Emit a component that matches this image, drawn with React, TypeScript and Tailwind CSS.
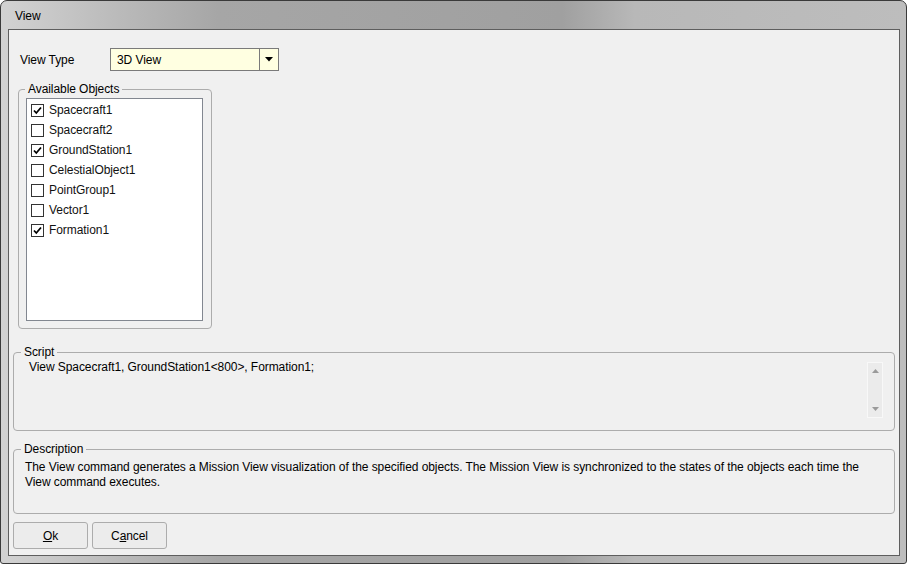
import React from 'react';

interface ViewObject {
  name: string;
  checked: boolean;
}

const objects: ViewObject[] = [
  { name: 'Spacecraft1', checked: true },
  { name: 'Spacecraft2', checked: false },
  { name: 'GroundStation1', checked: true },
  { name: 'CelestialObject1', checked: false },
  { name: 'PointGroup1', checked: false },
  { name: 'Vector1', checked: false },
  { name: 'Formation1', checked: true },
];

function CheckBox({ checked }: { checked: boolean }) {
  return (
    <div className="w-[13px] h-[13px] border border-[#333] bg-white flex items-center justify-center shrink-0">
      {checked && (
        <svg width="9" height="9" viewBox="0 0 9 9">
          <path d="M1 4.5 L3.3 7 L8 1.5" fill="none" stroke="#000" strokeWidth="1.8" />
        </svg>
      )}
    </div>
  );
}

export default function App() {
  return (
    <div
      className="w-[907px] h-[564px] flex flex-col border border-[#3a3a3a] rounded-t-[7px] rounded-b-[3px] overflow-hidden bg-[linear-gradient(90deg,#d2d2d2_0%,#a6a6a6_24%,#a0a0a0_62%,#b8b8b8_70%,#bdbdbd_100%)] text-[12px] tracking-[-0.07px] text-black"
      style={{ fontFamily: '"Liberation Sans", Arial, sans-serif' }}
    >
      {/* Title bar */}
      <div className="h-[28px] flex items-center pl-[14px] pt-[1px] text-[12px]">View</div>

      {/* Client area */}
      <div className="flex-1 ml-[7px] mr-[6px] mb-[7px] border border-[#5e5e5e] bg-[#f0f0f0] flex flex-col">
        {/* View type row */}
        <div className="flex items-center mt-[18px] ml-[11px]">
          <span className="w-[90px]">View Type</span>
          <div className="w-[169px] h-[23px] border border-[#7a7a7a] bg-[#ffffe1] flex items-stretch">
            <span className="flex-1 pl-[6px] flex items-center">3D View</span>
            <div className="w-[19px] border-l border-[#7a7a7a] flex items-center justify-center">
              <svg width="8" height="5" viewBox="0 0 8 5">
                <path d="M0 0 H8 L4 4.5 Z" fill="#000" />
              </svg>
            </div>
          </div>
        </div>

        {/* Available objects */}
        <fieldset className="ml-[9px] mt-[10px] w-[194px] h-[248px] border border-[#acacac] rounded-[4px]">
          <legend className="ml-[6px] px-[3px] leading-[16px]">Available Objects</legend>
          <div className="pl-[7px] pr-[8px] pb-[6px] pt-[1px]">
            <div className="h-[223px] border border-[#828790] bg-white pl-[4px] pt-[1px]">
              {objects.map((o) => (
                <div key={o.name} className="h-[20px] flex items-center gap-[5px]">
                  <CheckBox checked={o.checked} />
                  <span className="text-[#111]">{o.name}</span>
                </div>
              ))}
            </div>
          </div>
        </fieldset>

        {/* Script */}
        <fieldset className="ml-[4px] mr-[4px] mt-[15px] h-[87px] border border-[#acacac] rounded-[4px]">
          <legend className="ml-[7px] px-[3px] leading-[16px]">Script</legend>
          <div className="flex w-full pl-[15px] pr-[11px]">
            <div className="flex-1 -mt-[2px]">View Spacecraft1, GroundStation1&lt;800&gt;, Formation1;</div>
            <div className="w-[16px] h-[56px] mt-[2px] border border-[#f8f8f8] bg-[#ebebeb] flex flex-col items-center justify-between py-[6px]">
              <svg width="7" height="4" viewBox="0 0 7 4">
                <path d="M0 4 L3.5 0 L7 4 Z" fill="#9a9a9a" />
              </svg>
              <svg width="7" height="4" viewBox="0 0 7 4">
                <path d="M0 0 L3.5 4 L7 0 Z" fill="#9a9a9a" />
              </svg>
            </div>
          </div>
        </fieldset>

        {/* Description */}
        <fieldset className="ml-[4px] mr-[4px] mt-[10px] h-[73px] border border-[#acacac] rounded-[4px]">
          <legend className="ml-[7px] px-[3px] leading-[16px]">Description</legend>
          <p className="leading-[15px] pt-[3px] pl-[11px] pr-[8px]">
            The View command generates a Mission View visualization of the specified objects. The Mission View is synchronized to the states of the objects each time the View command executes.
          </p>
        </fieldset>

        {/* Buttons */}
        <div className="flex gap-[4px] ml-[4px] mt-[8px]">
          <button className="w-[75px] h-[27px] border border-[#acacac] rounded-[3px] bg-[#ececec]">
            <span className="underline">O</span>k
          </button>
          <button className="w-[75px] h-[27px] border border-[#acacac] rounded-[3px] bg-[#ececec]">
            C<span className="underline">a</span>ncel
          </button>
        </div>
      </div>
    </div>
  );
}
